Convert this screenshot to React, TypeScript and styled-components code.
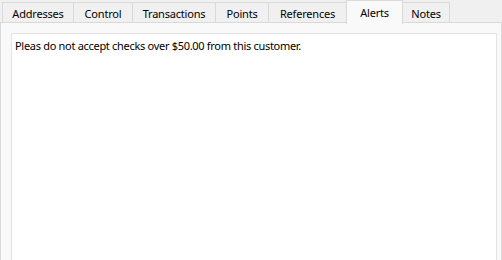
import * as React from 'react';
import styled, { createGlobalStyle } from 'styled-components';

const GlobalStyle = createGlobalStyle`
  html, body {
    margin: 0;
    padding: 0;
    background: #f0f0f0;
  }
  body {
    font-family: 'Noto Sans', 'Liberation Sans', sans-serif;
    font-size: 11px;
    color: #000;
  }
`;

const tabs = [
  { label: 'Addresses', width: 72 },
  { label: 'Control', width: 60 },
  { label: 'Transactions', width: 84 },
  { label: 'Points', width: 54 },
  { label: 'References', width: 79 },
  { label: 'Alerts', width: 57 },
  { label: 'Notes', width: 48 },
];

const Window = styled.div`
  width: 502px;
  height: 260px;
  overflow: hidden;
  display: flex;
  flex-direction: column;
  background: #f0f0f0;
`;

const TabStrip = styled.div`
  display: flex;
  align-items: flex-end;
  height: 23px;
  padding-left: 2px;
  position: relative;
  z-index: 1;
`;

const Tab = styled.div<{ $active?: boolean; $width: number }>`
  box-sizing: border-box;
  width: ${(p) => p.$width}px;
  height: ${(p) => (p.$active ? 24 : 21)}px;
  margin-left: -1px;
  margin-bottom: ${(p) => (p.$active ? -1 : 0)}px;
  border: 1px solid #d9d9d9;
  border-bottom: ${(p) => (p.$active ? 'none' : '1px solid #d9d9d9')};
  background: ${(p) => (p.$active ? '#f9f9f9' : '#f0f0f0')};
  display: flex;
  justify-content: center;
  padding-top: ${(p) => (p.$active ? 4 : 3)}px;
  line-height: 15px;
  font-size: 11px;
  letter-spacing: -0.2px;
  white-space: nowrap;
  &:first-child {
    margin-left: 0;
  }
`;

const Page = styled.div`
  flex: 1;
  box-sizing: border-box;
  margin-top: -1px;
  border: 1px solid #d9d9d9;
  border-bottom: none;
  background: #f9f9f9;
  padding: 10px 4px 0 10px;
  display: flex;
`;

const AlertBox = styled.div`
  flex: 1;
  box-sizing: border-box;
  background: #ffffff;
  border: 1px solid #e3e3e3;
  border-bottom: none;
  padding: 4px 3px;
  line-height: 16px;
  font-size: 11px;
  letter-spacing: -0.3px;
`;

export default function App() {
  return (
    <Window>
      <GlobalStyle />
      <TabStrip>
        {tabs.map((t) => (
          <Tab key={t.label} $width={t.width} $active={t.label === 'Alerts'}>
            {t.label}
          </Tab>
        ))}
      </TabStrip>
      <Page>
        <AlertBox>Pleas do not accept checks over $50.00 from this customer.</AlertBox>
      </Page>
    </Window>
  );
}
